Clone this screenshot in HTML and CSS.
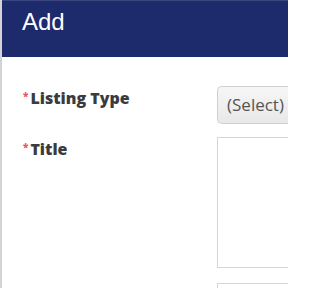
FILE: index.html
```html
<!DOCTYPE html>
<html>
<head>
<meta charset="utf-8">
<link rel="stylesheet" href="styles.css">
</head>
<body>
<div class="modal">
  <div class="header"><h1 class="title">Add</h1></div>
  <div class="form">
    <div class="row">
      <label class="label"><span class="req">*</span>Listing Type</label>
      <div class="field"><div class="select">(Select)</div></div>
    </div>
    <div class="row">
      <label class="label"><span class="req">*</span>Title</label>
      <div class="field"><div class="textarea"></div></div>
    </div>
    <div class="row">
      <label class="label"></label>
      <div class="field"><div class="input"></div></div>
    </div>
  </div>
</div>
</body>
</html>
```
FILE: styles.css
```css
html, body { margin: 0; padding: 0; background: #fff; overflow: hidden; width: 288px; height: 288px; }
.modal { width: 288px; height: 288px; border-left: 2px solid #d4d4d8; box-sizing: border-box; overflow: hidden; }
.header { height: 57px; background: #1d2a6c; border-top: 1px solid #3a4680; box-sizing: border-box; display: flex; align-items: flex-start; padding-left: 20px; }
.title { margin: 0; padding-top: 7px; line-height: 28px; color: #fff; font-family: "Liberation Sans", Arial, sans-serif; font-weight: normal; font-size: 24px; }
.form { padding-top: 29px; }
.row { display: flex; margin-bottom: 13px; }
.label { width: 215px; flex: none; padding-left: 21px; box-sizing: border-box; padding-top: 1px; font-family: "Open Sans", sans-serif; font-weight: 800; font-size: 16px; color: #3b3b3d; white-space: nowrap; }
.req { color: #e8555a; font-size: 10px; margin-right: 2px; position: relative; top: -4px; }
.field { flex: 1; min-width: 0; overflow: hidden; }
.select { height: 38px; box-sizing: border-box; border: 1px solid #cfcfcf; border-right: none; border-radius: 5px 0 0 5px; background: linear-gradient(#f6f6f6, #e8e8e8); font-family: "Open Sans", sans-serif; font-size: 17px; color: #555; padding-left: 9px; line-height: 36px; white-space: nowrap; }
.textarea { height: 131px; border: 1px solid #d6d6d6; border-right: none; box-sizing: border-box; }
.input { height: 30px; border: 1px solid #d6d6d6; border-right: none; box-sizing: border-box; margin-top: 2px; }
```
